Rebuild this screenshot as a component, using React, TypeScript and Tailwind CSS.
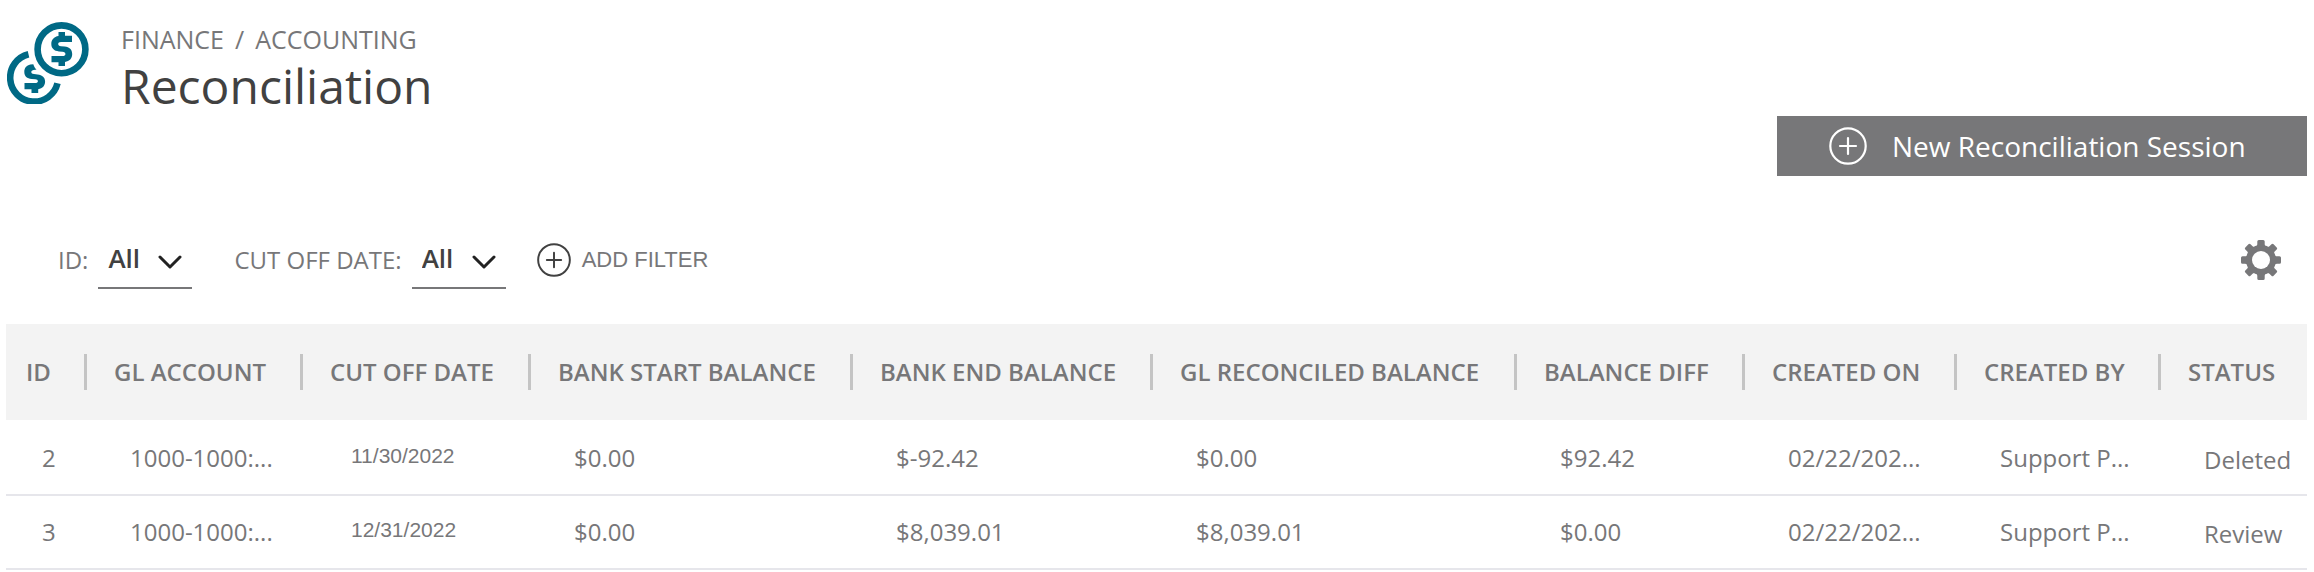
import React from "react";

const SANS = "font-['Open_Sans',sans-serif]";
const HELV = "font-['Liberation_Sans',sans-serif]";

const columns = [
  { label: "ID", width: 78 },
  { label: "GL ACCOUNT", width: 216 },
  { label: "CUT OFF DATE", width: 228 },
  { label: "BANK START BALANCE", width: 322 },
  { label: "BANK END BALANCE", width: 300 },
  { label: "GL RECONCILED BALANCE", width: 364 },
  { label: "BALANCE DIFF", width: 228 },
  { label: "CREATED ON", width: 212 },
  { label: "CREATED BY", width: 204 },
  { label: "STATUS", width: 149 },
];
const totalWidth = columns.reduce((sum, c) => sum + c.width, 0);

const rows = [
  ["2", "1000-1000:...", "11/30/2022", "$0.00", "$-92.42", "$0.00", "$92.42", "02/22/202...", "Support P...", "Deleted"],
  ["3", "1000-1000:...", "12/31/2022", "$0.00", "$8,039.01", "$8,039.01", "$0.00", "02/22/202...", "Support P...", "Review"],
];

const cellStyles: Record<number, string> = {
  0: "pl-9",
  2: `pl-[51px] pb-1 text-[21px] ${HELV}`,
  9: "pl-[46px] pt-1",
};

function CoinsIcon() {
  return (
    <svg className="size-[82px] shrink-0 text-[#006985]" viewBox="0 0 82 82" fill="none" aria-hidden="true">
      <circle cx="54.5" cy="27.3" r="23.9" stroke="currentColor" strokeWidth="6.6" />
      <path d="M21.5 32.3A24 24 0 1 0 50.5 61.3" stroke="currentColor" strokeWidth="6.6" />
      <path
        transform="translate(44 10)"
        d="M7.5 0h6.5v3.7h7V10H10c-1.9 0-2.8.8-2.8 2.1s.9 2 2.8 2.2l3.5.3c5 .5 7.7 3.2 7.7 7.500 0 4.500-2.700 7.400-7.200 7.900v4H7.500v-3.700H.5V24h11c1.900 0 2.900-.8 2.900-2.100s-.9-2-2.900-2.200L8 19.400C3 18.900.3 16.300.3 12 .3 7.600 3 4.500 7.500 3.900Z"
        fill="currentColor"
      />
      <path
        d="M26.300 42.200C27 44.300 28 46 29.500 47.800C26 47.500 24.300 48.600 24.300 50C24.300 51.200 25.200 51.900 27 52.100L30.500 52.400C35.400 52.900 38.100 55.400 38.100 59.600C38.100 63.800 35.600 66.600 31.200 67.200V71H24.500V67.300H17.500V61H28C29.900 61 30.900 60.300 30.900 59.200C30.900 58 30 57.500 28.200 57.300L24.700 57C20 56.500 17.300 54 17.300 49.900C17.300 46 19.500 43.400 23.300 42.600Z"
        fill="currentColor"
      />
    </svg>
  );
}

function PlusCircle({ className }: { className: string }) {
  return (
    <svg className={className} viewBox="0 0 38 38" fill="none" stroke="currentColor" strokeWidth="2.2" strokeLinecap="round" aria-hidden="true">
      <circle cx="19" cy="19" r="17.7" />
      <path d="M19 11v16M11 19h16" />
    </svg>
  );
}

function GearIcon() {
  return (
    <svg className="size-10" viewBox="0 0 40 40" fill="currentColor" aria-hidden="true">
      <mask id="gear-hole">
        <rect width="40" height="40" fill="white" />
        <circle cx="20" cy="20" r="9" fill="black" />
      </mask>
      <g mask="url(#gear-hole)">
        <circle cx="20" cy="20" r="15" />
        {[0, 45, 90, 135, 180, 225, 270, 315].map((a) => (
          <path key={a} transform={`rotate(${a} 20 20)`} d="M14 7C15.500 6.500 16.300 5.500 16.300 4V1.500Q16.300 0 17.800 0H22.200Q23.700 0 23.700 1.500V4C23.700 5.500 24.500 6.500 26 7L24 10H16Z" />
        ))}
      </g>
    </svg>
  );
}

function Filter({ id, label }: { id: string; label: string }) {
  return (
    <div className="flex items-center gap-[10px]">
      <label htmlFor={id} className="text-[24px] leading-8">{label}</label>
      <div className="relative border-b-2 border-[#777779]">
        <select id={id} className="block h-[57px] w-[94px] appearance-none bg-transparent pl-[10px] text-[26px] font-semibold text-[#414141] outline-none">
          <option>All</option>
        </select>
        <svg className="pointer-events-none absolute top-[25px] right-[10px] h-[14px] w-6 text-[#222]" viewBox="0 0 24 14" fill="none" stroke="currentColor" strokeWidth="3" strokeLinecap="round" strokeLinejoin="round" aria-hidden="true">
          <path d="M2 2l10 10L22 2" />
        </svg>
      </div>
    </div>
  );
}

export default function App() {
  return (
    <main className={`bg-white px-[7px] pl-[6px] text-[#777779] ${SANS}`}>
      <header className="flex pt-[22px] pl-px">
        <CoinsIcon />
        <div className="ml-8">
          <nav aria-label="Breadcrumb" className="flex gap-[11px] text-[25px] leading-[34px]">
            <a href="#finance">FINANCE</a>
            <span>/</span>
            <a href="#accounting">ACCOUNTING</a>
          </nav>
          <h1 className="text-[48px] leading-[60px] text-[#414141]">Reconciliation</h1>
        </div>
      </header>

      <div className="flex justify-end">
        <button type="button" className="flex h-[60px] w-[530px] items-center bg-[#777779] pl-[52px] text-[28px] text-white">
          <PlusCircle className="mr-[25px] size-[38px]" />
          New Reconciliation Session
        </button>
      </div>

      <div className="mt-[54px] flex items-center pr-[26px] pl-[52px]">
        <div className="flex flex-1 items-center">
          <Filter id="filter-id" label="ID:" />
          <div className="ml-[42px]">
            <Filter id="filter-date" label="CUT OFF DATE:" />
          </div>
          <button type="button" className={`ml-[31px] flex items-center gap-[11px] text-[22px] ${HELV}`}>
            <PlusCircle className="size-[34px] text-[#414141]" />
            ADD FILTER
          </button>
        </div>
        <button type="button" aria-label="Settings">
          <GearIcon />
        </button>
      </div>

      <table className="mt-[35px] w-full table-fixed border-separate border-spacing-0 text-left text-[24px]">
        <colgroup>
          {columns.map((c) => (
            <col key={c.label} style={{ width: `${(c.width / totalWidth) * 100}%` }} />
          ))}
        </colgroup>
        <thead>
          <tr className="bg-[#f3f3f3]">
            {columns.map((c, i) => (
              <th key={c.label} scope="col" className="h-[98px] border-b-2 border-white p-0 font-semibold whitespace-nowrap">
                <div className={i === 0 ? "pl-5" : "border-l-3 border-[#c4c4c4] pl-[27px]"}>{c.label}</div>
              </th>
            ))}
          </tr>
        </thead>
        <tbody>
          {rows.map((row) => (
            <tr key={row[0]}>
              {row.map((cell, i) => (
                <td key={i} className={`h-[74px] border-b-2 border-[#e6e6eb] whitespace-nowrap ${cellStyles[i] ?? "pl-[46px]"}`}>{cell}</td>
              ))}
            </tr>
          ))}
        </tbody>
      </table>
    </main>
  );
}
